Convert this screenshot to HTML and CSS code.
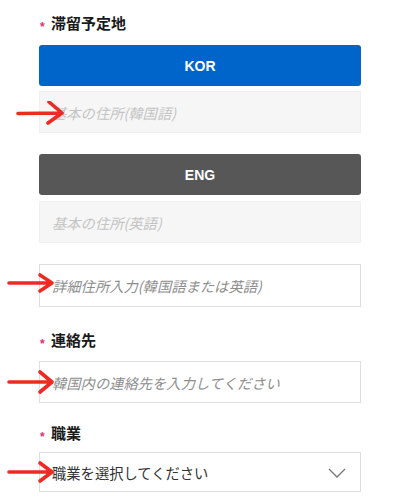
FILE: index.html
```html
<!DOCTYPE html>
<html lang="ja">
<head>
<meta charset="utf-8">
<link rel="stylesheet" href="styles.css">
</head>
<body>
<div class="form">
  <div class="label label-first"><span class="req">*</span>滞留予定地</div>
  <div class="btn btn-kor">KOR</div>
  <div class="field field-gray field-after-btn">
    <span class="ph ph-light">基本の住所(韓国語)</span>
    <svg class="arrow arrow-1" width="60" height="26" viewBox="0 0 60 26"><path d="M2 12.5 L46 12 M33 1 L46 12 L32 22" fill="none" stroke="#ee2a24" stroke-width="3.6" stroke-linecap="round" stroke-linejoin="round"/></svg>
  </div>
  <div class="btn btn-eng">ENG</div>
  <div class="field field-gray field-after-btn2">
    <span class="ph ph-light">基本の住所(英語)</span>
  </div>
  <div class="field field-white field-detail">
    <span class="ph ph-mid">詳細住所入力(韓国語または英語)</span>
    <svg class="arrow arrow-2" width="60" height="26" viewBox="0 0 60 26"><path d="M2 13 L45 13 M33 5 L45 13 L33 21" fill="none" stroke="#ee2a24" stroke-width="3.6" stroke-linecap="round" stroke-linejoin="round"/></svg>
  </div>
  <div class="label label-contact"><span class="req">*</span>連絡先</div>
  <div class="field field-white field-contact">
    <span class="ph ph-mid">韓国内の連絡先を入力してください</span>
    <svg class="arrow arrow-3" width="60" height="26" viewBox="0 0 60 26"><path d="M2 13 L45 13 M33 3 L45 13 L33 23" fill="none" stroke="#ee2a24" stroke-width="3.6" stroke-linecap="round" stroke-linejoin="round"/></svg>
  </div>
  <div class="label label-job"><span class="req">*</span>職業</div>
  <div class="field field-white field-select">
    <span class="sel-text">職業を選択してください</span>
    <svg class="chevron" width="18" height="10" viewBox="0 0 18 10"><polyline points="1,1 9,9 17,1" fill="none" stroke="#777" stroke-width="1.3"/></svg>
    <svg class="arrow arrow-4" width="60" height="26" viewBox="0 0 60 26"><path d="M2 13 L45 13 M33 4 L45 13 L33 22" fill="none" stroke="#ee2a24" stroke-width="3.6" stroke-linecap="round" stroke-linejoin="round"/></svg>
  </div>
</div>
</body>
</html>
```
FILE: styles.css
```css
html, body {
  margin: 0;
  padding: 0;
  background: #fff;
}
body {
  font-family: "Noto Sans CJK JP", "Noto Sans", sans-serif;
  color: #222;
}
.form {
  width: 322px;
  padding: 12px 0 0 39px;
  display: flex;
  flex-direction: column;
}
.label {
  height: 22px;
  line-height: 22px;
  font-size: 15px;
  font-weight: 700;
  color: #1a1a1a;
  white-space: nowrap;
}
.req {
  display: inline-block;
  color: #e5306a;
  font-size: 12px;
  font-weight: 700;
  width: 12px;
  padding-left: 1px;
  box-sizing: border-box;
  vertical-align: -2px;
  line-height: 12px;
  font-family: "Liberation Sans", sans-serif;
}
.label-contact { margin-top: 22px; }
.label-job { margin-top: 19px; }
.btn {
  margin-top: 11px;
  height: 41px;
  border-radius: 3px;
  color: #fff;
  font-family: "Liberation Sans", sans-serif;
  font-weight: 700;
  font-size: 14px;
  display: flex;
  align-items: center;
  justify-content: center;
}
.btn-kor { background: #0065cb; }
.btn-eng { background: #575757; margin-top: 21px; }
.field {
  position: relative;
  height: 42px;
  box-sizing: border-box;
  display: flex;
  align-items: center;
  padding-left: 12px;
  font-size: 14.3px;
}
.field-gray {
  background: #f6f6f6;
  border: 1px solid #f0f0f0;
}
.field-white {
  background: #fff;
  border: 1px solid #dedede;
}
.field-after-btn { margin-top: 5px; }
.field-after-btn2 { margin-top: 6px; }
.field-detail { margin-top: 21px; height: 43px; }
.field-contact { margin-top: 10px; }
.field-select { margin-top: 8px; height: 40px; }
.ph { font-style: italic; }
.ph-light { color: #c4c4c4; }
.ph-mid { color: #8e8e8e; }
.sel-text { color: #333; }
.chevron {
  position: absolute;
  right: 14px;
  top: 15px;
}
.arrow {
  position: absolute;
  left: -39px;
}
.arrow-1 { left: -24px; top: 9px; }
.arrow-2 { left: -33px; top: 5px; }
.arrow-3 { left: -33px; top: 7px; }
.arrow-4 { left: -33px; top: 6px; }
```
